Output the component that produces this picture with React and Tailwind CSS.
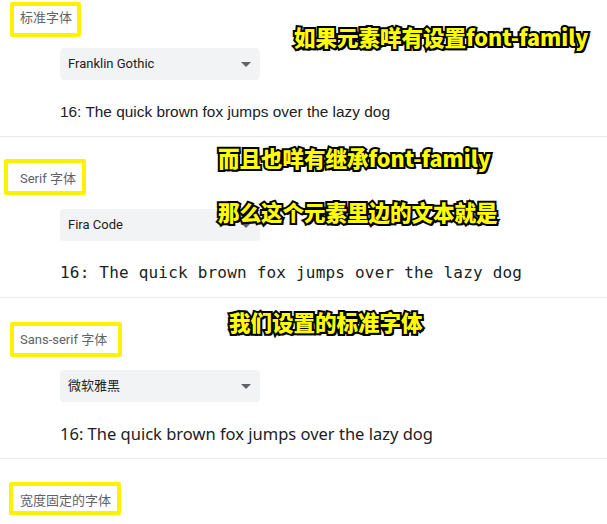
const sections = [
  {
    label: "标准字体",
    value: "Franklin Gothic",
    sampleClass: "font-['Liberation_Sans',sans-serif] text-[15.4px]",
    box: "top-[26px] left-[10px] w-[71px] h-[35px]",
  },
  {
    label: "Serif 字体",
    value: "Fira Code",
    sampleClass: "font-['DejaVu_Sans_Mono',monospace] text-[16px] tracking-[0.2px]",
    box: "top-[22px] left-[4px] w-[82px] h-[36px]",
  },
  {
    label: "Sans-serif 字体",
    value: "微软雅黑",
    sampleClass: "font-['Noto_Sans','Noto_Sans_CJK_SC',sans-serif] text-[16.5px]",
    box: "top-[24px] left-[10px] w-[112px] h-[35px]",
  },
  {
    label: "宽度固定的字体",
    box: "top-[23px] left-[9px] w-[112px] h-[33px]",
    last: true,
  },
];

const captions = [
  { text: "如果元素咩有设置font-family", pos: "top-[24px] left-[294px]" },
  { text: "而且也咩有继承font-family", pos: "top-[145px] left-[218px]" },
  { text: "那么这个元素里边的文本就是", pos: "top-[199px] left-[218px]" },
  { text: "我们设置的标准字体", pos: "top-[309px] left-[229px]" },
];

function Select({ value }) {
  return (
    <div className="mt-[20px] ml-[60px] w-[200px] h-[32px] rounded-[4px] bg-[#f1f3f4] flex items-center justify-between pl-[8px] pr-[9px]">
      <span className="text-[13px] text-[#202124]">{value}</span>
      <span className="w-0 h-0 border-l-[5px] border-r-[5px] border-t-[5px] border-l-transparent border-r-transparent border-t-[#5f6368]" />
    </div>
  );
}

function Section({ s }) {
  return (
    <div className={`relative pt-[32px] ${s.last ? "" : "pb-[12px] border-b border-[#e8eaed]"}`}>
      <p className="pl-[20px] h-[20px] leading-[20px] text-[13px] text-[#5f6368]">{s.label}</p>
      {s.value && <Select value={s.value} />}
      {s.value && (
        <p className={`mt-[20px] ml-[60px] h-[24px] leading-[24px] text-[#202124] whitespace-nowrap ${s.sampleClass}`}>
          16: The quick brown fox jumps over the lazy dog
        </p>
      )}
      <div className={`absolute border-[4px] border-[#fff200] rounded-[2px] ${s.box}`} />
    </div>
  );
}

export default function App() {
  return (
    <div className="w-[607px] h-[524px] overflow-hidden bg-white font-['Roboto','Noto_Sans_CJK_SC',sans-serif]">
      <div className="relative mt-[-24px]">
        {sections.map((s, i) => (
          <Section key={i} s={s} />
        ))}
        {captions.map((c, i) => (
          <div
            key={i}
            className={`absolute ${c.pos} mt-[24px] text-[21.5px] leading-[26px] font-black text-[#ffff00] whitespace-nowrap font-['Noto_Sans_CJK_SC','Liberation_Sans',sans-serif] [-webkit-text-stroke:4px_#000] [paint-order:stroke_fill] [text-shadow:2px_2px_0_#000]`}
          >
            {c.text}
          </div>
        ))}
      </div>
    </div>
  );
}
